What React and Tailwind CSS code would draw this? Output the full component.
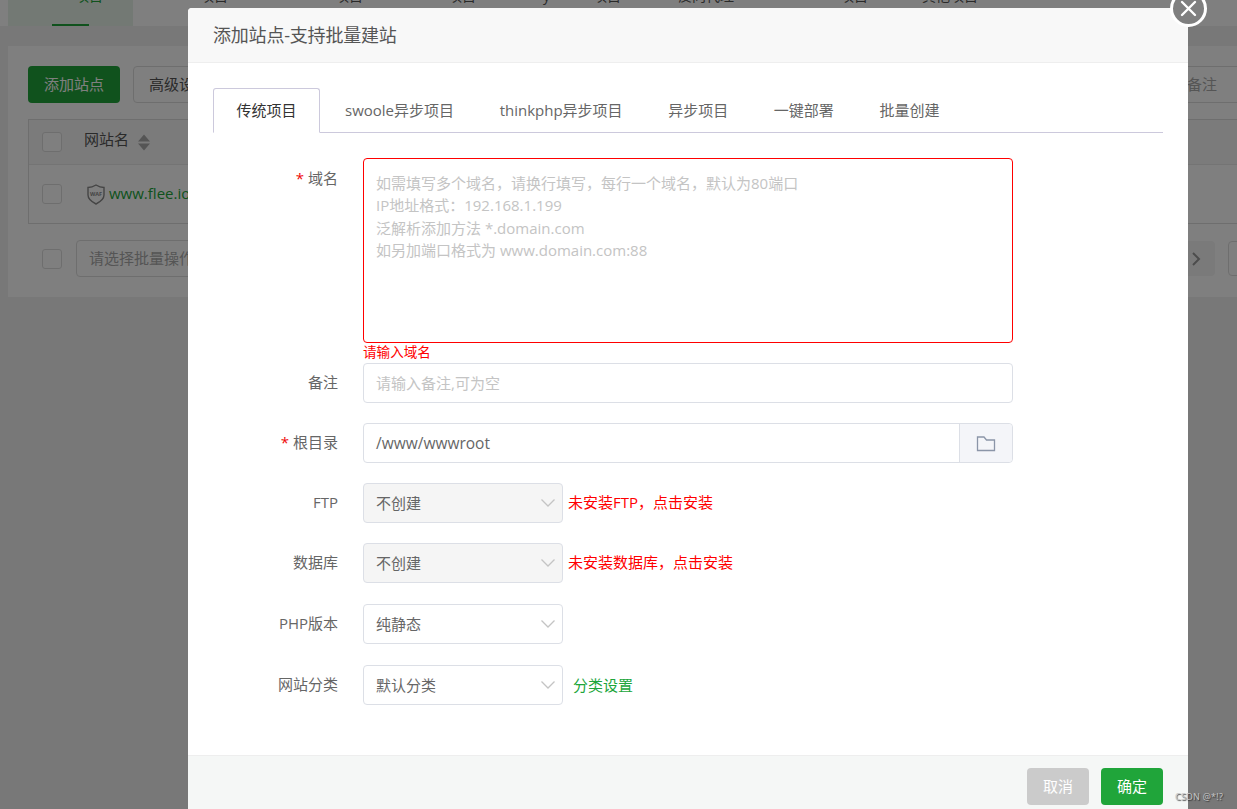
const font = { fontFamily: '"Open Sans","Noto Sans CJK SC",sans-serif' };

function Chevron() {
  return (
    <svg width="16" height="10" viewBox="0 0 16 10" fill="none" stroke="#c4c4c4" strokeWidth="1.3">
      <path d="M1.5 1.5 L8 8 L14.5 1.5" />
    </svg>
  );
}

function Label({ children, required, top }) {
  return (
    <div className={`w-[125px] shrink-0 flex justify-end text-[15px] text-[#666] ${top ? "pt-[9px] leading-[22px]" : "items-center -mt-[1px]"}`}>
      {required && <span className="text-[#ef0808] mr-[4px]">*</span>}
      <span>{children}</span>
    </div>
  );
}

function Select({ children, disabled }) {
  return (
    <div className={`w-[200px] h-10 shrink-0 rounded border border-[#dcdfe6] flex items-center justify-between pl-[12px] pr-[6px] text-[15px] text-[#666] ${disabled ? "bg-[#f5f5f5]" : "bg-white"}`}>
      <span>{children}</span>
      <Chevron />
    </div>
  );
}

function Row({ label, required, children, className = "" }) {
  return (
    <div className={`flex gap-[25px] h-10 ${className}`}>
      <Label required={required}>{label}</Label>
      {children}
    </div>
  );
}

function TopTab({ ml, children }) {
  return <span className={`${ml} -mt-[11px] h-fit shrink-0 whitespace-nowrap`}>{children}</span>;
}

function Background() {
  return (
    <div className="h-[809px] bg-[#f0f0f0] flex flex-col">
      <div className="h-[26px] bg-white flex text-[14px] text-[#555] leading-none overflow-hidden">
        <div className="ml-2 w-[125px] h-[26px] shrink-0 bg-[#e6f2e8] flex pl-[67px] relative">
          <span className="-mt-[11px] h-fit text-[#20a53a]">项目</span>
          <span className="absolute bottom-0 left-[44px] w-[37px] h-[2px] bg-[#20a53a]"></span>
        </div>
        <TopTab ml="ml-[67px]">项目</TopTab>
        <TopTab ml="ml-[107px]">项目</TopTab>
        <TopTab ml="ml-[85px]">项目</TopTab>
        <TopTab ml="ml-[67px]">y</TopTab>
        <TopTab ml="ml-[43px]">项目</TopTab>
        <TopTab ml="ml-[57px]">反向代理</TopTab>
        <TopTab ml="ml-[106px]">项目</TopTab>
        <TopTab ml="ml-[54px]">其他项目</TopTab>
        <TopTab ml="ml-[215px]">◆</TopTab>
      </div>
      <div className="mt-5 ml-2 h-[251px] bg-white px-5 pt-5">
        <div className="flex justify-between h-[37px] text-[15px] -mr-5">
          <div className="flex gap-[13px]">
            <div className="w-[92px] rounded bg-[#20a53a] text-white flex items-center justify-center">添加站点</div>
            <div className="w-[120px] rounded border border-[#ddd] text-[#555] pl-[15px] flex items-center">高级设置</div>
          </div>
          <div className="w-[69px] pl-[19px] border-y border-[#ddd] text-[#aaa] flex items-center">备注</div>
        </div>
        <div className="mt-4 -mr-5 h-[105px] border border-[#ddd] border-r-0 text-[15px]">
          <div className="h-[45px] bg-[#f7f7f7] border-b border-[#e8e8e8] flex items-center pl-[13px]">
            <div className="w-5 h-5 rounded-[3px] border border-[#ddd] bg-white"></div>
            <span className="ml-[22px] -mt-[6px] text-[#555]">网站名</span>
            <svg className="ml-[9px]" width="12" height="17" viewBox="0 0 12 16" fill="#aaa">
              <path d="M6 0 L12 7 H0 Z M0 9 H12 L6 16 Z" />
            </svg>
          </div>
          <div className="h-[58px] flex items-center pl-[13px]">
            <div className="w-5 h-5 rounded-[3px] border border-[#ddd] bg-white"></div>
            <svg className="ml-[25px]" width="18" height="21" viewBox="0 0 18 21" fill="none" stroke="#8a8a8a" strokeWidth="1.4">
              <path d="M1 3.5 Q5 3.5 9 1 Q13 3.5 17 3.5 V11 Q17 16 9 20 Q1 16 1 11 Z" />
              <text x="9" y="11.5" textAnchor="middle" fontSize="5.5" fontWeight="700" fill="#8a8a8a" stroke="none">WAF</text>
            </svg>
            <span className="ml-1 -mt-[2px] text-[15px] text-[#20a53a]">www.flee.io</span>
          </div>
        </div>
        <div className="mt-4 flex items-center pl-[14px] text-[15px]">
          <div className="w-5 h-5 shrink-0 rounded-[3px] border border-[#ddd] bg-white"></div>
          <div className="ml-[14px] w-[200px] h-[37px] shrink-0 rounded border border-[#ddd] text-[#aaa] pl-3 flex items-center">请选择批量操作</div>
          <div className="ml-[901px] w-[38px] h-[35px] shrink-0 rounded-sm bg-[#f5f5f5] flex items-center justify-center">
            <svg width="10" height="14" viewBox="0 0 10 14" fill="none" stroke="#999" strokeWidth="2">
              <path d="M2 1 L8 7 L2 13" />
            </svg>
          </div>
          <div className="ml-[13px] w-[30px] h-[35px] shrink-0 rounded-sm border border-[#ddd]"></div>
        </div>
      </div>
    </div>
  );
}

export default function App() {
  return (
    <div className="relative w-[1237px] h-[809px] overflow-hidden" style={font}>
      <Background />
      <div className="absolute inset-0 bg-black/50"></div>

      <div className="absolute left-[188px] top-2 w-[1000px] h-[811px] bg-white rounded-t-[4px] flex flex-col">
        <div className="h-[55px] shrink-0 bg-[#f8f8f8] border-b border-[#eee] rounded-t-[4px] pl-[25px] flex items-center text-[18px] tracking-[-0.2px] text-[#555]">
          添加站点-支持批量建站
        </div>

        <div className="h-[692px] shrink-0 px-[25px] pt-[25px]">
          <div className="flex h-[45px] border-b border-[#ccc9dc] text-[15px] text-[#666]">
            <div className="w-[107px] h-[45px] bg-white border border-[#ccc9dc] border-b-white rounded-t-[3px] flex items-center justify-center text-[#333]">传统项目</div>
            <div className="ml-[25px] flex items-center gap-[45.6px]">
              <span>swoole异步项目</span>
              <span>thinkphp异步项目</span>
              <span>异步项目</span>
              <span>一键部署</span>
              <span>批量创建</span>
            </div>
          </div>

          <div className="mt-[25px] flex gap-[25px] h-[185px]">
            <Label required top>域名</Label>
            <textarea
              readOnly
              className="w-[650px] h-[185px] resize-none rounded border border-[#ff0000] outline-none px-[12px] pt-[13px] text-[15px] leading-[22.4px] placeholder:text-[#c4c4c4]"
              placeholder={"如需填写多个域名，请换行填写，每行一个域名，默认为80端口\nIP地址格式：192.168.1.199\n泛解析添加方法 *.domain.com\n如另加端口格式为 www.domain.com:88"}
            />
          </div>
          <div className="ml-[150px] h-5 text-[13.6px] leading-[18px] text-[#ff0000]">请输入域名</div>

          <Row label="备注">
            <input
              readOnly
              className="w-[650px] h-10 rounded border border-[#dcdfe6] outline-none px-[12px] text-[15px] placeholder:text-[#c4c4c4]"
              placeholder="请输入备注,可为空"
            />
          </Row>

          <Row label="根目录" required className="mt-5">
            <div className="w-[650px] h-10 flex rounded border border-[#dcdfe6]">
              <div className="flex-1 px-[12px] pt-px flex items-center text-[15.5px] text-[#666]">/www/wwwroot</div>
              <div className="w-[53px] bg-[#f4f5f9] border-l border-[#dcdfe6] rounded-r flex items-center justify-center">
                <svg width="20" height="17" viewBox="0 0 20 17" fill="none" stroke="#8b95a8" strokeWidth="1.3">
                  <path d="M1.5 2 H8 L10.5 5 H18.5 V15.5 H1.5 Z" />
                </svg>
              </div>
            </div>
          </Row>

          <Row label="FTP" className="mt-5">
            <Select disabled>不创建</Select>
            <span className="-ml-5 self-center -mt-[2px] text-[15px] text-[#ff0000]">未安装FTP，点击安装</span>
          </Row>

          <Row label="数据库" className="mt-5">
            <Select disabled>不创建</Select>
            <span className="-ml-5 self-center -mt-[2px] text-[15px] text-[#ff0000]">未安装数据库，点击安装</span>
          </Row>

          <Row label="PHP版本" className="mt-[21px]">
            <Select>纯静态</Select>
          </Row>

          <Row label="网站分类" className="mt-[21px]">
            <Select>默认分类</Select>
            <span className="-ml-[15px] self-center text-[15px] text-[#20a53a]">分类设置</span>
          </Row>
        </div>

        <div className="flex-1 bg-[#f5f7f6] border-t border-[#eee] flex justify-end items-start gap-3 pr-[25px] pt-3 text-[15px] text-white">
          <div className="w-[62px] h-[37px] rounded bg-[#cbcbcb] flex items-center justify-center">取消</div>
          <div className="w-[62px] h-[37px] rounded bg-[#20a53a] flex items-center justify-center">确定</div>
        </div>
      </div>

      <div className="absolute left-[1170px] -top-[10px] w-[37px] h-[37px] rounded-full bg-[#7f7f7f] border-[3px] border-white flex items-center justify-center">
        <svg width="17" height="17" viewBox="0 0 17 17" stroke="#fff" strokeWidth="2.4" strokeLinecap="round">
          <path d="M2 2 L15 15 M15 2 L2 15" />
        </svg>
      </div>

      <div className="absolute left-[1175px] top-[790px] text-[9px] tracking-[0.3px] text-[#c8c8c8] [text-shadow:1px_1px_1px_#333]">CSDN @*!?</div>
    </div>
  );
}
